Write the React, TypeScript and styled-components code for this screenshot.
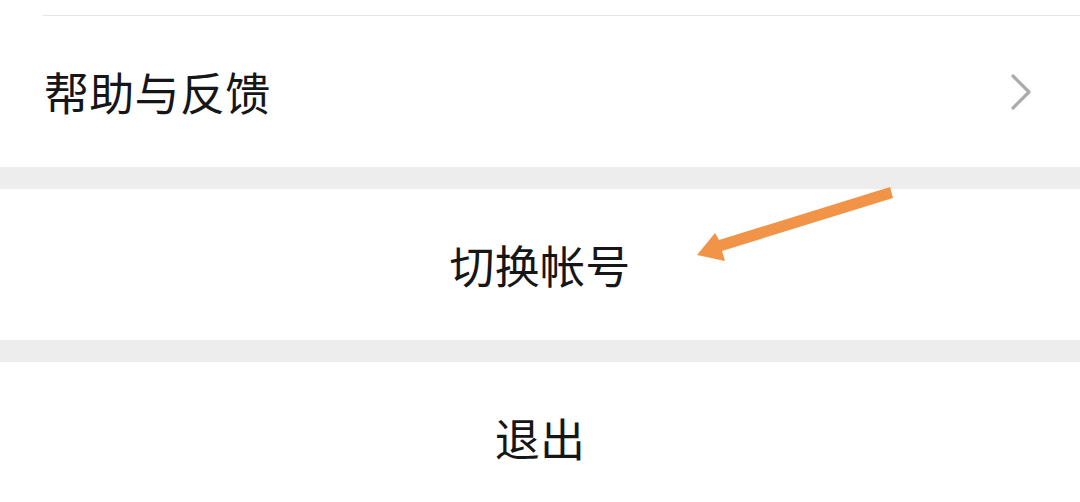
import React from "react";
import styled, { createGlobalStyle } from "styled-components";

const Global = createGlobalStyle`
  html, body { margin: 0; padding: 0; background: #ededed; }
  body { font-family: "Noto Sans CJK SC", "Noto Sans", sans-serif; overflow: hidden; }
`;

const Page = styled.div`
  position: relative;
  width: 1080px;
  height: 502px;
  overflow: hidden;
  background: #ededed;
  display: flex;
  flex-direction: column;
  gap: 22px;
`;

const Group = styled.div`
  background: #ffffff;
  display: flex;
  flex-direction: column;
`;

const TopStub = styled.div`
  height: 15px;
  background: #ffffff;
`;

const Divider = styled.div`
  height: 1px;
  margin-left: 43px;
  background: #e6e6e6;
`;

const ListRow = styled.div`
  height: 151px;
  display: flex;
  align-items: center;
  justify-content: space-between;
  padding: 0 46px 0 44px;
  box-sizing: border-box;
`;

const Label = styled.span`
  font-size: 45px;
  line-height: 1;
  color: #161616;
  letter-spacing: 0.3px;
`;

const ActionRow = styled.div<{ $h: number }>`
  height: ${(p) => p.$h}px;
  flex-shrink: 0;
  background: #ffffff;
  display: flex;
  align-items: center;
  justify-content: center;
`;

const Arrow = styled.svg`
  position: absolute;
  left: 0;
  top: 0;
  pointer-events: none;
`;

export default function App() {
  return (
    <>
      <Global />
      <Page>
        <Group>
          <TopStub />
          <Divider />
          <ListRow>
            <Label>帮助与反馈</Label>
            <svg width="24" height="38" viewBox="0 0 24 38">
              <path d="M3 3 L19 19 L3 35" fill="none" stroke="#ababab" strokeWidth="3.2" strokeLinecap="round" strokeLinejoin="round" />
            </svg>
          </ListRow>
        </Group>
        <ActionRow $h={151}>
          <Label>切换帐号</Label>
        </ActionRow>
        <ActionRow $h={150}>
          <Label>退出</Label>
        </ActionRow>
        <Arrow width="1080" height="502" viewBox="0 0 1080 502">
          <polygon points="890,187 893,198 722,251 725,261 697,255 715,233 719,240" fill="#f19448" />
        </Arrow>
      </Page>
    </>
  );
}
